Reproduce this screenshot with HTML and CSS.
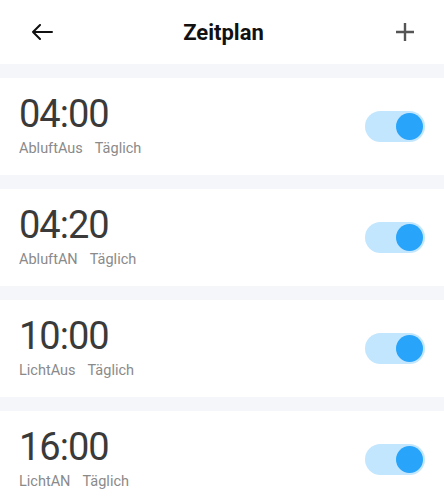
FILE: index.html
```html
<!DOCTYPE html>
<html lang="de">
    <head>
        <meta charset="UTF-8" />
        <title>Zeitplan</title>
        <link rel="stylesheet" href="styles.css">
    </head>
    <body>
        <header class="topbar">
            <span class="icon-btn back">
                <svg width="22" height="16" viewBox="0 0 22 16">
                    <path d="M21 8H2M9 1L2 8l7 7" fill="none" stroke="#111" stroke-width="2" stroke-linecap="round" stroke-linejoin="round" />
                </svg>
            </span>
            <h1 class="title">Zeitplan</h1>
            <span class="icon-btn add">
                <svg width="20" height="20" viewBox="0 0 20 20">
                    <path d="M10 1v18M1 10h18" fill="none" stroke="#555" stroke-width="2.4" />
                </svg>
            </span>
        </header>

        <!-- Schedule list -->
        <main class="list">
            <div class="item">
                <div class="info">
                    <div class="time">04:00</div>
                    <div class="meta"><span>AbluftAus</span><span>Täglich</span></div>
                </div>
                <span class="switch on"><span class="knob"></span></span>
            </div>
            <div class="item">
                <div class="info">
                    <div class="time">04:20</div>
                    <div class="meta"><span>AbluftAN</span><span>Täglich</span></div>
                </div>
                <span class="switch on"><span class="knob"></span></span>
            </div>
            <div class="item">
                <div class="info">
                    <div class="time">10:00</div>
                    <div class="meta"><span>LichtAus</span><span>Täglich</span></div>
                </div>
                <span class="switch on"><span class="knob"></span></span>
            </div>
            <div class="item">
                <div class="info">
                    <div class="time">16:00</div>
                    <div class="meta"><span>LichtAN</span><span>Täglich</span></div>
                </div>
                <span class="switch on"><span class="knob"></span></span>
            </div>
        </main>
    </body>
</html>
```

FILE: styles.css
```css
body {
    margin: 0;
    background-color: #f5f6fa;
    font-family: Roboto, 'Liberation Sans', sans-serif;
    color: #333;
}
.topbar {
    height: 64px;
    background-color: #fff;
    display: flex;
    align-items: center;
    justify-content: space-between;
    padding: 0 28px 0 31px;
}
.icon-btn {
    display: flex;
    align-items: center;
    justify-content: center;
    width: 22px;
    height: 22px;
}
.title {
    margin: 0;
    font-size: 22px;
    font-weight: 700;
    color: #111;
}
.list {
    display: flex;
    flex-direction: column;
    gap: 14px;
    padding-top: 14px;
}
.item {
    height: 97px;
    background-color: #fff;
    display: flex;
    align-items: center;
    justify-content: space-between;
    padding: 0 19px;
}
.time {
    font-size: 38px;
    letter-spacing: -1px;
    line-height: 44px;
    color: #3a3a3a;
    margin-top: -4px;
}
.meta {
    font-size: 14.5px;
    color: #8a8a8a;
    margin-top: 4px;
}
.meta span + span {
    margin-left: 12px;
}
.switch {
    width: 60px;
    height: 31px;
    border-radius: 16px;
    background-color: #c2e6fd;
    position: relative;
}
.switch .knob {
    position: absolute;
    top: 2px;
    right: 2px;
    width: 27px;
    height: 27px;
    border-radius: 50%;
    background-color: #28a4fa;
}
```
